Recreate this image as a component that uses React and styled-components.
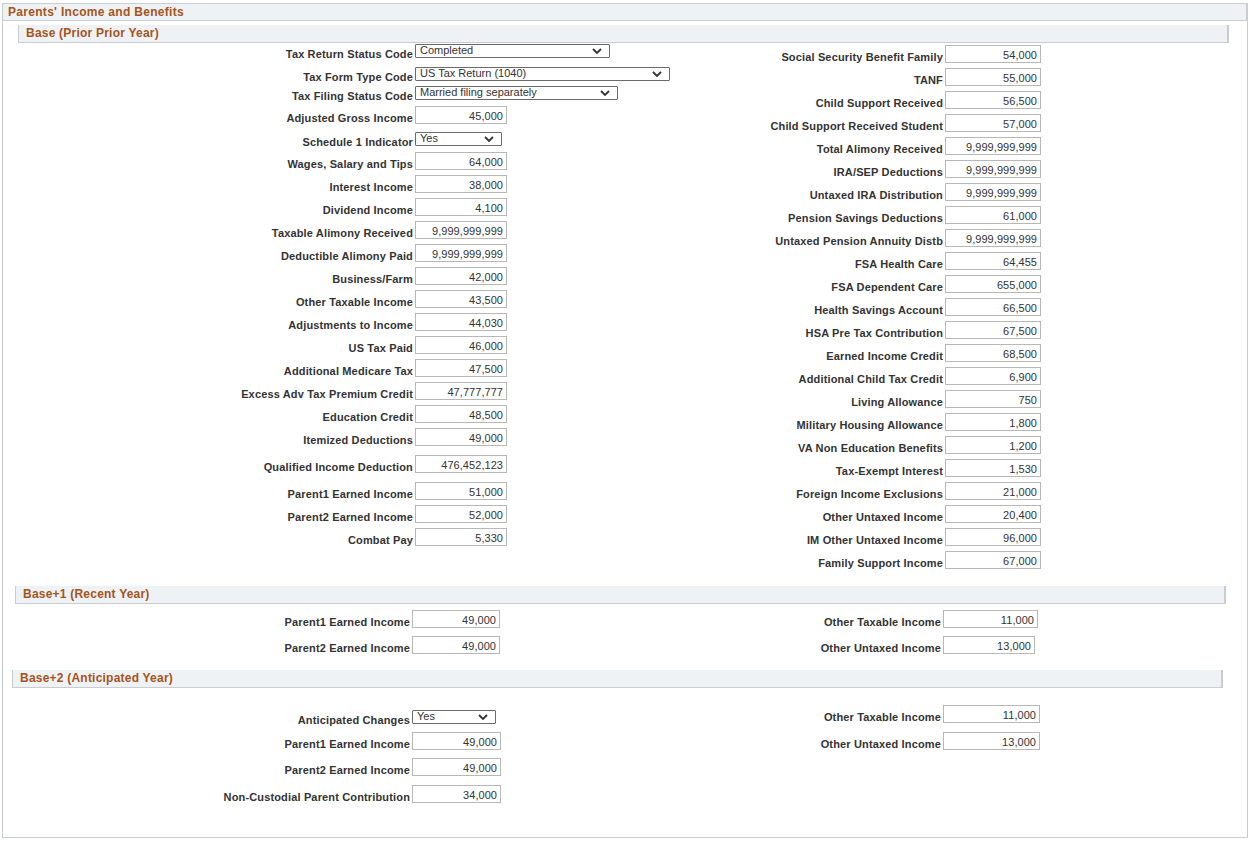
import React from "react";
import styled, { createGlobalStyle } from "styled-components";

const GlobalStyle = createGlobalStyle`
  body {
    margin: 0;
    background: #fff;
    font-family: "Liberation Sans", Arial, sans-serif;
  }
`;

const Frame = styled.div`
  margin: 3px 0 0 2px;
  width: 1246px;
  box-sizing: border-box;
  border: 1px solid #c9cdd1;
  padding-bottom: 34px;
`;

const TitleBar = styled.div`
  height: 16px;
  line-height: 16px;
  background: #eef2f4;
  border-bottom: 1px solid #c9cdd1;
  border-right: 1px solid #c9cdd1;
  padding-left: 5px;
  font-size: 12px;
  font-weight: bold;
  letter-spacing: 0.3px;
  color: #a5541c;
`;

const Section = styled.section`
  margin: ${(p) => p.$top}px 0 0 ${(p) => p.$left}px;
  width: 1211px;
`;

const SectionHeader = styled.div`
  box-sizing: border-box;
  height: 18px;
  line-height: 17px;
  background: #eef2f4;
  border-left: 1px solid #c9cdd1;
  border-bottom: 1px solid #c9cdd1;
  border-right: 2px solid #c9cdd1;
  padding-left: 7px;
  font-size: 12px;
  font-weight: bold;
  letter-spacing: 0.22px;
  color: #a5541c;
`;

const Body = styled.div`
  display: grid;
  grid-template-columns: 540px 1fr;
  align-items: start;
`;

const Column = styled.div`
  display: flex;
  flex-direction: column;
`;

const Row = styled.div`
  display: grid;
  grid-template-columns: ${(p) => p.$labelW}px auto;
  column-gap: 2px;
  align-items: end;
  justify-items: start;
  height: ${(p) => p.$h}px;
`;

const Label = styled.label`
  justify-self: end;
  position: relative;
  top: ${(p) => p.$drop}px;
  font-size: 11px;
  font-weight: bold;
  line-height: 13px;
  letter-spacing: 0.15px;
  color: #333;
  white-space: nowrap;
`;

const Amount = styled.input.attrs({ readOnly: true, type: "text" })`
  box-sizing: border-box;
  width: ${(p) => p.$w}px;
  height: 18px;
  margin: 0;
  border: 1px solid #b8b8b8;
  padding: 1px 3px 0;
  font: 11px "Liberation Sans", Arial, sans-serif;
  letter-spacing: 0.05px;
  color: #333;
  text-align: right;
  background: #fff;
  outline: none;
`;

const Select = styled.div`
  box-sizing: border-box;
  width: ${(p) => p.$w}px;
  height: 14px;
  border: 1px solid #6b6b6b;
  border-radius: 1px;
  display: flex;
  align-items: center;
  justify-content: space-between;
  padding: 0 7px 0 4px;
  font-size: 11px;
  line-height: 11px;
  color: #333;
  background: #fff;

  span {
    align-self: flex-start;
  }
`;

const Chevron = () => (
  <svg width="10" height="6" viewBox="0 0 10 6">
    <path d="M1 1 L5 5 L9 1" fill="none" stroke="#333" strokeWidth="1.8" />
  </svg>
);

const baseLeft = [
  { label: "Tax Return Status Code", select: "Completed", w: 195, h: 15 },
  { label: "Tax Form Type Code", select: "US Tax Return (1040)", w: 255, h: 23 },
  { label: "Tax Filing Status Code", select: "Married filing separately", w: 203, h: 19 },
  { label: "Adjusted Gross Income", value: "45,000", h: 24 },
  { label: "Schedule 1 Indicator", select: "Yes", w: 87, h: 22 },
  { label: "Wages, Salary and Tips", value: "64,000", h: 24 },
  { label: "Interest Income", value: "38,000" },
  { label: "Dividend Income", value: "4,100" },
  { label: "Taxable Alimony Received", value: "9,999,999,999" },
  { label: "Deductible Alimony Paid", value: "9,999,999,999" },
  { label: "Business/Farm", value: "42,000" },
  { label: "Other Taxable Income", value: "43,500" },
  { label: "Adjustments to Income", value: "44,030" },
  { label: "US Tax Paid", value: "46,000" },
  { label: "Additional Medicare Tax", value: "47,500" },
  { label: "Excess Adv Tax Premium Credit", value: "47,777,777" },
  { label: "Education Credit", value: "48,500" },
  { label: "Itemized Deductions", value: "49,000" },
  { label: "Qualified Income Deduction", value: "476,452,123", h: 27 },
  { label: "Parent1 Earned Income", value: "51,000", h: 27 },
  { label: "Parent2 Earned Income", value: "52,000" },
  { label: "Combat Pay", value: "5,330" },
];

const baseRight = [
  { label: "Social Security Benefit Family", value: "54,000", h: 20 },
  { label: "TANF", value: "55,000" },
  { label: "Child Support Received", value: "56,500" },
  { label: "Child Support Received Student", value: "57,000" },
  { label: "Total Alimony Received", value: "9,999,999,999" },
  { label: "IRA/SEP Deductions", value: "9,999,999,999" },
  { label: "Untaxed IRA Distribution", value: "9,999,999,999" },
  { label: "Pension Savings Deductions", value: "61,000" },
  { label: "Untaxed Pension Annuity Distb", value: "9,999,999,999" },
  { label: "FSA Health Care", value: "64,455" },
  { label: "FSA Dependent Care", value: "655,000" },
  { label: "Health Savings Account", value: "66,500" },
  { label: "HSA Pre Tax Contribution", value: "67,500" },
  { label: "Earned Income Credit", value: "68,500" },
  { label: "Additional Child Tax Credit", value: "6,900" },
  { label: "Living Allowance", value: "750" },
  { label: "Military Housing Allowance", value: "1,800" },
  { label: "VA Non Education Benefits", value: "1,200" },
  { label: "Tax-Exempt Interest", value: "1,530" },
  { label: "Foreign Income Exclusions", value: "21,000" },
  { label: "Other Untaxed Income", value: "20,400" },
  { label: "IM Other Untaxed Income", value: "96,000" },
  { label: "Family Support Income", value: "67,000" },
];

const recentLeft = [
  { label: "Parent1 Earned Income", value: "49,000", h: 24 },
  { label: "Parent2 Earned Income", value: "49,000", h: 26 },
];

const recentRight = [
  { label: "Other Taxable Income", value: "11,000", h: 24, w: 95 },
  { label: "Other Untaxed Income", value: "13,000", h: 26, w: 92 },
];

const anticipatedLeft = [
  { label: "Anticipated Changes", select: "Yes", w: 84, h: 36 },
  { label: "Parent1 Earned Income", value: "49,000", h: 26 },
  { label: "Parent2 Earned Income", value: "49,000", h: 26 },
  { label: "Non-Custodial Parent Contribution", value: "34,000", h: 27 },
];

const anticipatedRight = [
  { label: "Other Taxable Income", value: "11,000", h: 35 },
  { label: "Other Untaxed Income", value: "13,000", h: 27 },
];

function FieldColumn({ fields, labelW, inputW }) {
  return (
    <Column>
      {fields.map((f) => (
        <Row key={f.label} $labelW={labelW} $h={f.h || 23}>
          <Label $drop={f.select ? 3 : 1}>{f.label}</Label>
          {f.select ? (
            <Select $w={f.w}>
              <span>{f.select}</span>
              <Chevron />
            </Select>
          ) : (
            <Amount $w={f.w || inputW} value={f.value} />
          )}
        </Row>
      ))}
    </Column>
  );
}

export default function App() {
  return (
    <>
      <GlobalStyle />
      <Frame>
        <TitleBar>Parents' Income and Benefits</TitleBar>

        <Section $top={4} $left={15}>
          <SectionHeader>Base (Prior Prior Year)</SectionHeader>
          <Body>
            <FieldColumn fields={baseLeft} labelW={395} inputW={92} />
            <FieldColumn fields={baseRight} labelW={385} inputW={96} />
          </Body>
        </Section>

        <Section $top={17} $left={12}>
          <SectionHeader>Base+1 (Recent Year)</SectionHeader>
          <Body>
            <FieldColumn fields={recentLeft} labelW={395} inputW={88} />
            <FieldColumn fields={recentRight} labelW={386} inputW={95} />
          </Body>
        </Section>

        <Section $top={16} $left={9}>
          <SectionHeader>Base+2 (Anticipated Year)</SectionHeader>
          <Body>
            <FieldColumn fields={anticipatedLeft} labelW={398} inputW={89} />
            <FieldColumn fields={anticipatedRight} labelW={389} inputW={97} />
          </Body>
        </Section>
      </Frame>
    </>
  );
}
